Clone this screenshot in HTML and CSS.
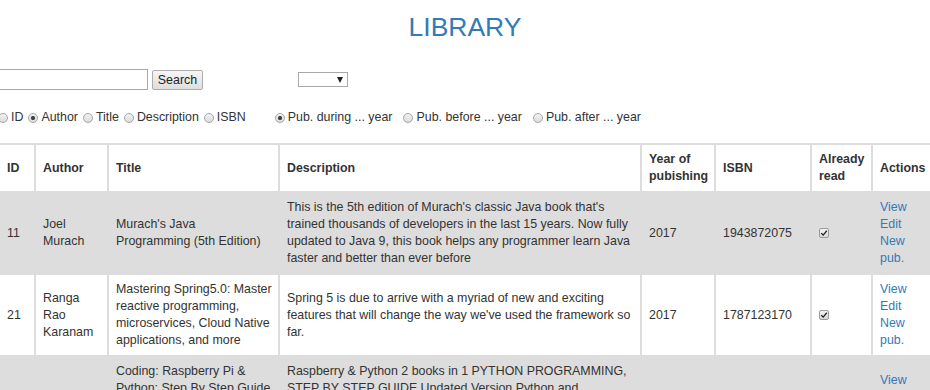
FILE: index.html
```html
<!DOCTYPE html>
<html lang="en">
<head>
  <meta charset="UTF-8">
  <title>Library</title>
  <link rel="stylesheet" href="styles.css">
</head>
<body>
  <h1 class="title">LIBRARY</h1>

  <form class="search-bar">
    <input type="text" class="search-input">
    <button type="button" class="search-btn">Search</button>
    <span class="select-wrap"><select class="year-select"></select></span>
  </form>

  <div class="filters">
    <div class="filter-group">
      <label class="opt"><input type="radio" name="field"> ID</label>
      <label class="opt"><input type="radio" name="field" checked> Author</label>
      <label class="opt"><input type="radio" name="field"> Title</label>
      <label class="opt"><input type="radio" name="field"> Description</label>
      <label class="opt"><input type="radio" name="field"> ISBN</label>
    </div>
    <div class="filter-group years">
      <label class="opt"><input type="radio" name="when" checked> Pub. during ... year</label>
      <label class="opt"><input type="radio" name="when"> Pub. before ... year</label>
      <label class="opt"><input type="radio" name="when"> Pub. after ... year</label>
    </div>
  </div>

  <table class="books">
    <colgroup>
      <col class="c-id"><col class="c-author"><col class="c-title"><col class="c-desc">
      <col class="c-year"><col class="c-isbn"><col class="c-read"><col class="c-actions">
    </colgroup>
    <thead>
      <tr>
        <th>ID</th>
        <th>Author</th>
        <th>Title</th>
        <th>Description</th>
        <th>Year of pubishing</th>
        <th>ISBN</th>
        <th>Already read</th>
        <th>Actions</th>
      </tr>
    </thead>
    <tbody>
      <tr>
        <td>11</td>
        <td>Joel Murach</td>
        <td>Murach's Java Programming (5th Edition)</td>
        <td>This is the 5th edition of Murach's classic Java book that's trained thousands of developers in the last 15 years. Now fully updated to Java 9, this book helps any programmer learn Java faster and better than ever before</td>
        <td>2017</td>
        <td>1943872075</td>
        <td><span class="check"><svg viewBox="0 0 10 10" width="8" height="8"><path d="M1.5 5.2 L4 7.6 L8.5 2.2" fill="none" stroke="#222" stroke-width="1.6"/></svg></span></td>
        <td class="actions"><a href="#">View</a> <a href="#">Edit</a> <a href="#">New pub.</a></td>
      </tr>
      <tr>
        <td>21</td>
        <td>Ranga Rao Karanam</td>
        <td>Mastering Spring5.0: Master reactive programming, microservices, Cloud Native applications, and more</td>
        <td>Spring 5 is due to arrive with a myriad of new and exciting features that will change the way we've used the framework so far.</td>
        <td>2017</td>
        <td>1787123170</td>
        <td><span class="check"><svg viewBox="0 0 10 10" width="8" height="8"><path d="M1.5 5.2 L4 7.6 L8.5 2.2" fill="none" stroke="#222" stroke-width="1.6"/></svg></span></td>
        <td class="actions"><a href="#">View</a> <a href="#">Edit</a> <a href="#">New pub.</a></td>
      </tr>
      <tr>
        <td>31</td>
        <td>Steve Tale</td>
        <td>Coding: Raspberry Pi &amp; Python: Step By Step Guide To Mastering Raspberry Pi 3 &amp; Python Programming Fast (2 Books in 1)</td>
        <td>Raspberry &amp; Python 2 books in 1 PYTHON PROGRAMMING, STEP BY STEP GUIDE Updated Version Python and Raspberry Pi for beginners. Learn how to code with this complete guide covering the hardware setup, the basic syntax and your very first projects.</td>
        <td>2016</td>
        <td>1541198301</td>
        <td><span class="check"></span></td>
        <td class="actions"><a href="#">View</a> <a href="#">Edit</a> <a href="#">New pub.</a></td>
      </tr>
    </tbody>
  </table>
</body>
</html>
```

FILE: styles.css
```css
html, body {
  margin: 0;
  padding: 0;
  overflow: hidden;
  background-color: #fff;
  color: #333;
  font-family: 'Liberation Sans', Arial, sans-serif;
  font-size: 12.4px;
  line-height: 17px;
}

.title {
  margin: 13px 0 0;
  font-size: 26.5px;
  line-height: 29px;
  font-weight: normal;
  color: #337ab7;
  text-align: center;
}

/* barre de recherche */
.search-bar {
  display: flex;
  align-items: center;
  height: 21px;
  margin: 27px 0 0 -15px;
}

.search-input {
  box-sizing: border-box;
  width: 163px;
  height: 21px;
  margin: 0;
  border: 1px solid #a9a9a9;
  font: inherit;
}

.search-btn {
  box-sizing: border-box;
  width: 51px;
  height: 20px;
  margin: 0 0 0 4px;
  padding: 0;
  border: 1px solid #adadad;
  border-radius: 2px;
  background: linear-gradient(#f6f6f6, #dedede);
  color: #222;
  font: inherit;
  line-height: 18px;
}

.select-wrap {
  position: relative;
  margin-left: 95px;
}

.year-select {
  appearance: none;
  -webkit-appearance: none;
  box-sizing: border-box;
  display: block;
  width: 50px;
  height: 15px;
  margin: 0;
  border: 1px solid #a9a9a9;
  background: #fff;
}

.select-wrap::after {
  content: "";
  position: absolute;
  right: 5px;
  top: 5px;
  border-left: 3.5px solid transparent;
  border-right: 3.5px solid transparent;
  border-top: 6px solid #222;
}

/* filtres */
.filters {
  display: flex;
  align-items: center;
  height: 17px;
  margin: 19px 0 0 -2px;
}

.filter-group {
  display: flex;
  gap: 5px;
}

.filter-group.years {
  gap: 11px;
  margin-left: 29px;
}

.opt {
  display: inline-flex;
  align-items: center;
  gap: 3px;
  white-space: nowrap;
}

.opt input {
  appearance: none;
  -webkit-appearance: none;
  box-sizing: border-box;
  width: 10px;
  height: 10px;
  margin: 0;
  border: 1px solid #a6a6a6;
  border-radius: 50%;
  background: linear-gradient(#f2f2f2, #dcdcdc);
}

.opt input:checked {
  background: radial-gradient(circle, #444 0 1.8px, transparent 2.4px), linear-gradient(#f2f2f2, #dcdcdc);
}

/* tableau */
.books {
  width: 934px;
  margin-top: 17px;
  table-layout: fixed;
  border-collapse: collapse;
  border-top: 2px solid #ddd;
}

.c-id { width: 35px; }
.c-author { width: 73px; }
.c-title { width: 171px; }
.c-desc { width: 362px; }
.c-year { width: 74px; }
.c-isbn { width: 96px; }
.c-read { width: 61px; }
.c-actions { width: 62px; }

.books th,
.books td {
  padding: 6px 7px;
  border: 2px solid #ddd;
  text-align: left;
  vertical-align: middle;
}

.books td:nth-child(3) {
  padding-right: 5.5px;
}

.books th:first-child,
.books td:first-child {
  border-left: none;
}

.books th {
  font-weight: bold;
}

.books tbody tr:nth-child(odd) {
  background-color: #ddd;
}

.actions a {
  color: #337ab7;
  text-decoration: none;
}

.check {
  display: inline-flex;
  align-items: center;
  justify-content: center;
  box-sizing: border-box;
  width: 10px;
  height: 10px;
  border: 1px solid #9c9c9c;
  border-radius: 2px;
  background: linear-gradient(#f4f4f4, #dadada);
  vertical-align: middle;
}
```
